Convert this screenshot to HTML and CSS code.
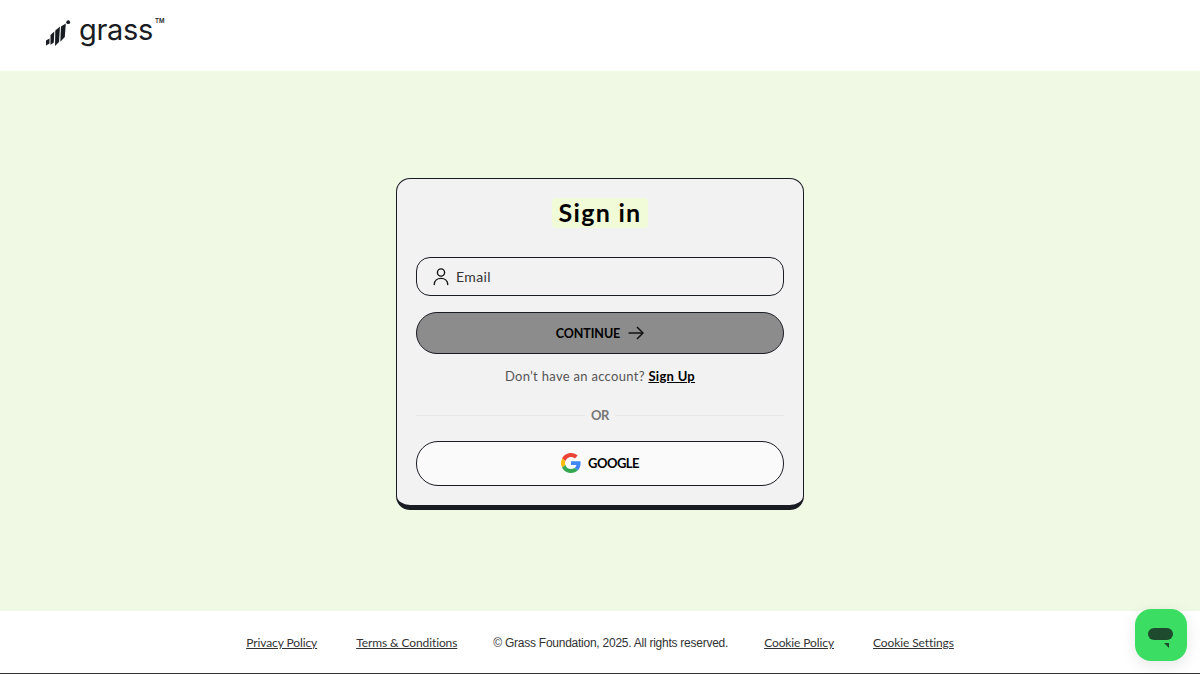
FILE: index.html
```html
<!DOCTYPE html>
<html>
<head>
  <meta name="viewport" content="width=device-width, initial-scale=1.0">
  <title>Sign in</title>
  <link rel="stylesheet" href="styles.css">
</head>
<body>
  <div class="header">
    <a class="logo" href="#">
      <svg class="logo-mark" width="26" height="28" viewBox="0 0 26 28">
        <path d="M1 21.500 L4.500 19.500 L4.500 24.500 L1 26.500 Z" fill="#1a1c24"/>
        <path d="M5.500 16 L9.300 12.500 L8.800 23.500 L5.500 25.800 Z" fill="#1a1c24"/>
        <path d="M10.300 11.500 L15 7.500 L14 23 L10 27 Z" fill="#1a1c24"/>
        <path d="M16 7.500 L20.800 4.500 L19.800 18 L15.300 22.800 Z" fill="#1a1c24"/>
        <circle cx="23.200" cy="3.200" r="1.900" fill="#1a1c24"/>
      </svg>
      <span class="logo-text">grass</span>
      <span class="logo-tm">TM</span>
    </a>
  </div>

  <div class="main">
    <div class="card">
      <div class="title-row">
        <h1 class="title">Sign in</h1>
      </div>

      <div class="input-box">
        <svg width="18" height="19" viewBox="0 0 20 20" fill="none" stroke="#111" stroke-width="1.500">
          <circle cx="10" cy="5.500" r="4"/>
          <path d="M2.500 19 C2.500 14.500 6 12 10 12 C14 12 17.500 14.500 17.500 19" stroke-linecap="round"/>
        </svg>
        <span class="placeholder">Email</span>
      </div>

      <button class="btn btn-continue">
        CONTINUE
        <svg width="16" height="14" viewBox="0 0 16 14" fill="none" stroke="#111" stroke-width="1.500">
          <path d="M0.500 7 H15"/>
          <path d="M9 1 L15 7 L9 13"/>
        </svg>
      </button>

      <p class="signup">Don’t have an account? <a href="#">Sign Up</a></p>

      <div class="divider"><span>OR</span></div>

      <button class="btn btn-google">
        <svg width="20" height="20" viewBox="0 0 48 48">
          <path fill="#EA4335" d="M24 9.500c3.540 0 6.710 1.220 9.210 3.600l6.850-6.850C35.900 2.380 30.470 0 24 0 14.620 0 6.510 5.380 2.560 13.220l7.980 6.190C12.430 13.720 17.740 9.500 24 9.500z"/>
          <path fill="#4285F4" d="M46.980 24.550c0-1.570-.15-3.090-.38-4.550H24v9.020h12.940c-.58 2.960-2.260 5.480-4.780 7.180l7.730 6c4.510-4.180 7.090-10.360 7.090-17.650z"/>
          <path fill="#FBBC05" d="M10.530 28.590c-.48-1.450-.76-2.990-.76-4.590s.27-3.140.76-4.590l-7.980-6.190C.92 16.460 0 20.120 0 24c0 3.880.92 7.540 2.560 10.780l7.970-6.190z"/>
          <path fill="#34A853" d="M24 48c6.480 0 11.930-2.130 15.890-5.810l-7.730-6c-2.150 1.450-4.920 2.300-8.160 2.300-6.260 0-11.570-4.220-13.470-9.910l-7.980 6.190C6.510 42.620 14.620 48 24 48z"/>
        </svg>
        GOOGLE
      </button>
    </div>
  </div>

  <div class="footer">
    <a href="#">Privacy Policy</a>
    <a href="#">Terms &amp; Conditions</a>
    <span class="copyright">© Grass Foundation, 2025. All rights reserved.</span>
    <a href="#">Cookie Policy</a>
    <a href="#">Cookie Settings</a>
  </div>

  <div class="chat-button">
    <span class="chat-pill"></span>
    <span class="chat-tail"></span>
  </div>
</body>
</html>
```

FILE: styles.css
```css
* {
  box-sizing: border-box;
}

body {
  font-family: "Lato", "Open Sans", sans-serif;
  margin: 0;
  height: 674px;
  display: flex;
  flex-direction: column;
  background-color: #ffffff;
  color: #000000;
  overflow: hidden;
}

.header {
  height: 71px;
  padding: 14px 0 0 45px;
  flex-shrink: 0;
}

.logo {
  display: flex;
  align-items: flex-start;
  text-decoration: none;
  color: #1a1c24;
}

.logo-mark {
  margin-top: 5px;
}

.logo-text {
  font-family: "Inter", sans-serif;
  font-size: 29px;
  line-height: 32px;
  margin-left: 8px;
  letter-spacing: -0.3px;
}

.logo-tm {
  font-family: "Inter", sans-serif;
  font-size: 6px;
  font-weight: 600;
  margin: 3px 0 0 2px;
}

.main {
  flex: 1;
  background-color: #f0f9e4;
  display: flex;
  justify-content: center;
  padding-top: 107px;
}

.card {
  width: 408px;
  height: 332px;
  padding: 19px 19px 0;
  background-color: #f2f2f2;
  border: 1px solid #1a1c24;
  border-bottom-width: 5px;
  border-radius: 14px;
}

.title-row {
  display: flex;
  justify-content: center;
  margin-bottom: 29px;
}

.title {
  margin: 0;
  padding: 0 7px;
  height: 30px;
  line-height: 28px;
  font-size: 25px;
  font-weight: 700;
  letter-spacing: 1.3px;
  background-color: #f1fbd8;
  border-radius: 4px;
}

.input-box {
  height: 39px;
  padding: 0 15px 1px;
  display: flex;
  align-items: center;
  gap: 6px;
  border: 1px solid #1a1c24;
  border-radius: 14px;
}

.placeholder {
  font-size: 14px;
  letter-spacing: 0.4px;
  color: #333333;
}

.btn {
  width: 100%;
  display: flex;
  justify-content: center;
  align-items: center;
  border: 1px solid #1a1c24;
  border-radius: 22px;
  font-family: "Lato", "Open Sans", sans-serif;
  font-weight: 700;
  color: #000000;
  cursor: pointer;
}

.btn-continue {
  height: 42px;
  margin-top: 16px;
  gap: 8px;
  font-size: 12.5px;
  letter-spacing: -0.1px;
  background-color: #8c8c8c;
}

.signup {
  margin: 12px 0 0;
  height: 20px;
  line-height: 20px;
  text-align: center;
  font-size: 13px;
  letter-spacing: 0.3px;
  color: #555555;
}

.signup a {
  color: #000000;
  font-weight: 700;
}

.divider {
  margin-top: 20px;
  height: 18px;
  display: flex;
  align-items: center;
  gap: 6px;
  font-size: 13px;
  font-weight: 700;
  letter-spacing: -0.3px;
  color: #777777;
}

.divider::before,
.divider::after {
  content: "";
  flex: 1;
  height: 1px;
  background-color: #e6e6e6;
}

.btn-google {
  height: 45px;
  margin-top: 17px;
  padding-bottom: 2px;
  gap: 7px;
  font-size: 13px;
  letter-spacing: -0.5px;
  background-color: #fafafa;
}

.footer {
  height: 63px;
  flex-shrink: 0;
  display: flex;
  justify-content: center;
  align-items: center;
  gap: 39px;
  padding-top: 1px;
  border-bottom: 1px solid #333333;
  font-size: 12px;
  letter-spacing: -0.1px;
}

.footer a {
  color: #333333;
}

.copyright {
  font-family: "Liberation Sans", sans-serif;
  font-size: 12px;
  letter-spacing: -0.25px;
  margin: 0 -3px;
  color: #333333;
}

.chat-button {
  position: fixed;
  left: 1135px;
  top: 609px;
  width: 52px;
  height: 52px;
  border-radius: 16px;
  background-color: #3bdd62;
  box-shadow: 0 4px 16px rgba(0, 0, 0, 0.1);
}

.chat-pill {
  position: absolute;
  left: 13px;
  top: 19px;
  width: 25px;
  height: 12px;
  border-radius: 6px;
  background-color: #1e4a2d;
}

.chat-tail {
  position: absolute;
  left: 29px;
  top: 34px;
  border-top: 5px solid #1e4a2d;
  border-left: 5px solid transparent;
}
```
